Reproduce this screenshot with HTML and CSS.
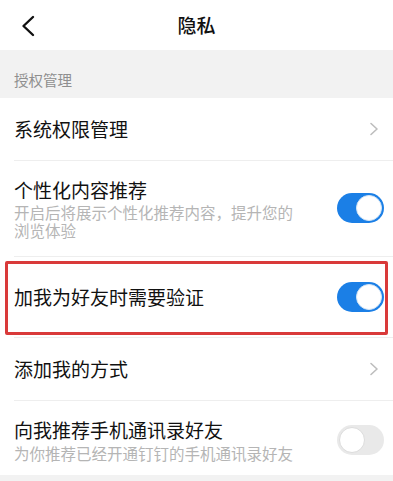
FILE: index.html
```html
<!DOCTYPE html>
<html lang="zh-CN">
<head>
    <meta charset="UTF-8">
    <meta name="viewport" content="width=device-width, initial-scale=1.0">
    <title>隐私</title>
    <link rel="stylesheet" href="styles.css">
</head>
<body>
    <div class="header">
        <a href="#" class="back">
            <svg width="16" height="22" viewBox="0 0 16 22">
                <path d="M13 2 L3.5 11 L13 20" fill="none" stroke="#111" stroke-width="2.4" stroke-linecap="round" stroke-linejoin="round"/>
            </svg>
        </a>
        <h1>隐私</h1>
    </div>

    <div class="section-title">授权管理</div>

    <div class="list">
        <div class="row">
            <div class="row-text">
                <div class="row-title">系统权限管理</div>
            </div>
            <svg class="chevron" width="10" height="14" viewBox="0 0 10 14">
                <path d="M2 1.5 L8 7 L2 12.5" fill="none" stroke="#bdbdbd" stroke-width="1.6" stroke-linecap="round" stroke-linejoin="round"/>
            </svg>
        </div>
        <div class="divider"></div>

        <div class="row row-tall">
            <div class="row-text">
                <div class="row-title">个性化内容推荐</div>
                <div class="row-desc">开启后将展示个性化推荐内容，提升您的浏览体验</div>
            </div>
            <div class="switch on"><span class="knob"></span></div>
        </div>
        <div class="divider"></div>

        <div class="row row-marked">
            <div class="row-text">
                <div class="row-title">加我为好友时需要验证</div>
            </div>
            <div class="switch on"><span class="knob"></span></div>
        </div>
        <div class="divider"></div>

        <div class="row">
            <div class="row-text">
                <div class="row-title">添加我的方式</div>
            </div>
            <svg class="chevron" width="10" height="14" viewBox="0 0 10 14">
                <path d="M2 1.5 L8 7 L2 12.5" fill="none" stroke="#bdbdbd" stroke-width="1.6" stroke-linecap="round" stroke-linejoin="round"/>
            </svg>
        </div>
        <div class="divider"></div>

        <div class="row row-last">
            <div class="row-text">
                <div class="row-title">向我推荐手机通讯录好友</div>
                <div class="row-desc">为你推荐已经开通钉钉的手机通讯录好友</div>
            </div>
            <div class="switch"><span class="knob"></span></div>
        </div>
    </div>

    <div class="footer-gap"></div>
</body>
</html>
```

FILE: styles.css
```css
/* Page de base */
body {
    margin: 0;
    padding: 0;
    background-color: #f2f2f2;
    font-family: "Noto Sans CJK SC", "Noto Sans", sans-serif;
    color: #111;
}

.header {
    height: 50px;
    background: white;
    display: flex;
    align-items: center;
    justify-content: center;
    position: relative;
}

.back {
    position: absolute;
    left: 20px;
    top: 15px;
    display: flex;
}

.header h1 {
    margin: 0;
    font-size: 19px;
    font-weight: 500;
    line-height: 26px;
}

.section-title {
    height: 48px;
    box-sizing: border-box;
    padding: 0 14px 8px;
    display: flex;
    align-items: flex-end;
    font-size: 14.5px;
    line-height: 20px;
    color: #8f8f8f;
}

.list {
    background: white;
}

.row {
    display: flex;
    align-items: center;
    padding: 0 9px 0 14px;
    height: 62px;
    position: relative;
}

.row-tall {
    height: auto;
    padding-top: 16px;
    padding-bottom: 17px;
}

.row-marked {
    height: 80px;
}

.row-marked::after {
    content: "";
    position: absolute;
    left: 5px;
    right: 5px;
    top: 4px;
    bottom: 2px;
    border: 3px solid #d93a3a;
    border-radius: 2px;
}

.row-last {
    height: auto;
    padding-top: 16px;
    padding-bottom: 12px;
}

.row-text {
    flex: 1;
    min-width: 0;
}

.row-title {
    font-size: 19px;
    line-height: 26px;
    color: #111;
}

.row-desc {
    font-size: 15.5px;
    line-height: 18px;
    color: #b5b5b5;
    max-width: 286px;
    white-space: normal;
}

.row-last .row-desc {
    line-height: 20px;
    white-space: nowrap;
}

.chevron {
    margin-right: 5px;
}

.divider {
    height: 1px;
    background: #eeeeee;
    margin-left: 14px;
}

.switch {
    width: 47px;
    height: 30px;
    border-radius: 15px;
    background: #e9e9e9;
    position: relative;
    flex-shrink: 0;
    margin-left: 10px;
}

.switch .knob {
    position: absolute;
    top: 2px;
    left: 2px;
    width: 24px;
    height: 24px;
    border-radius: 50%;
    background: white;
    border: 1px solid #dcdcdc;
}

.switch.on {
    background: #1b7fe6;
}

.switch.on .knob {
    left: auto;
    right: 2px;
    border-color: #d6e6f5;
}

.footer-gap {
    height: 20px;
}
```
